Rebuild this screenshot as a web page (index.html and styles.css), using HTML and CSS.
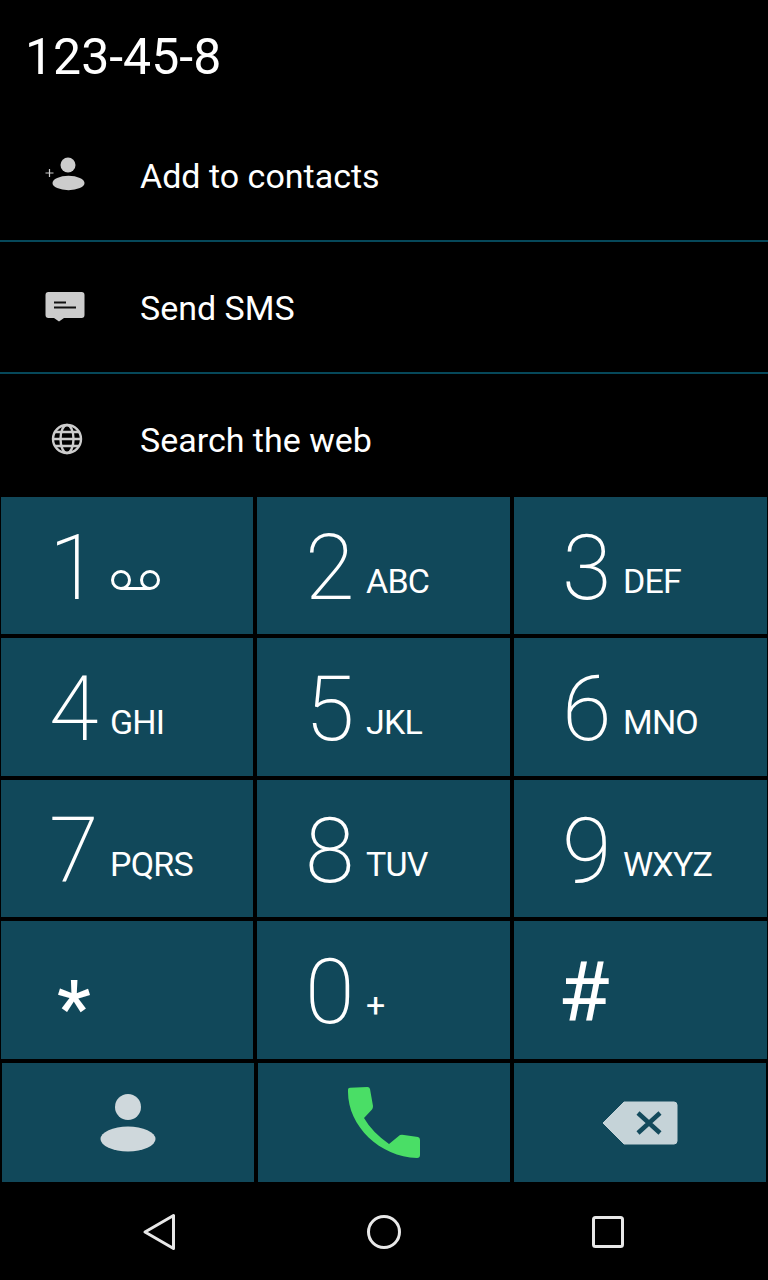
FILE: index.html
```html
<!DOCTYPE html>
<html lang="en">
<head>
    <meta charset="UTF-8">
    <title>Dialer</title>
    <link rel="stylesheet" href="styles.css">
</head>
<body>

<div class="number">123-45-8</div>

<div class="action">
    <svg class="actionIcon" viewBox="0 0 48 40">
        <circle cx="25" cy="10" r="7.500" fill="#ccc"/>
        <ellipse cx="25.500" cy="28" rx="16" ry="7.200" fill="#ccc"/>
        <path d="M2.500 18h8M6.500 14v8" stroke="#ccc" stroke-width="1.200" fill="none"/>
    </svg>
    <span>Add to contacts</span>
</div>
<div class="action">
    <svg class="actionIcon" viewBox="0 0 48 40">
        <path d="M5.500 5h33a3 3 0 0 1 3 3v20a3 3 0 0 1-3 3H21l-5 3.500-5-3.500H5.500a3 3 0 0 1-3-3V8a3 3 0 0 1 3-3z" fill="#ccc"/>
        <path d="M11 15.500h12M11 20.500h22" stroke="#111" stroke-width="1.800" fill="none"/>
    </svg>
    <span>Send SMS</span>
</div>
<div class="action last">
    <svg class="actionIcon" viewBox="0 0 48 40">
        <g fill="none" stroke="#ccc" stroke-width="2.400">
            <circle cx="24" cy="20" r="14"/>
            <ellipse cx="24" cy="20" rx="6.500" ry="14"/>
            <path d="M10 20h28M12 13h24M12 27h24"/>
        </g>
    </svg>
    <span>Search the web</span>
</div>

<div class="keypad">
    <div class="key"><span class="digit">1</span>
        <svg class="voicemail" viewBox="0 0 50 22">
            <g fill="none" stroke="#fff" stroke-width="3">
                <circle cx="10" cy="11" r="8.500"/>
                <circle cx="39" cy="11" r="8.500"/>
                <path d="M10 19.500h29"/>
            </g>
        </svg>
    </div>
    <div class="key"><span class="digit">2</span><span class="letters">ABC</span></div>
    <div class="key"><span class="digit">3</span><span class="letters">DEF</span></div>
    <div class="key"><span class="digit">4</span><span class="letters">GHI</span></div>
    <div class="key"><span class="digit">5</span><span class="letters">JKL</span></div>
    <div class="key"><span class="digit">6</span><span class="letters">MNO</span></div>
    <div class="key"><span class="digit">7</span><span class="letters">PQRS</span></div>
    <div class="key"><span class="digit">8</span><span class="letters">TUV</span></div>
    <div class="key"><span class="digit">9</span><span class="letters">WXYZ</span></div>
    <div class="key"><span class="digit star">*</span></div>
    <div class="key"><span class="digit">0</span><span class="letters">+</span></div>
    <div class="key"><span class="digit hash">#</span></div>
</div>

<div class="bottomKeys">
    <div class="bottomKey">
        <svg width="56" height="60" viewBox="0 0 56 60">
            <circle cx="28" cy="14" r="13" fill="#cfd8dc"/>
            <ellipse cx="28" cy="46" rx="27.500" ry="12.500" fill="#cfd8dc"/>
        </svg>
    </div>
    <div class="bottomKey">
        <svg width="74" height="74" viewBox="0 0 74 74">
            <path d="M1 3.500Q1 2 3 1.800L20.500 1Q22.500 1 23 3L26 20Q26 22 25 23.500L17 32Q25 46 42 58L53 49Q55 48.500 57 49L71 51Q73 51.500 73 54V69Q73 72 70 72C33 71 1 40 1 6Z" fill="#4ade66"/>
        </svg>
    </div>
    <div class="bottomKey">
        <svg width="76" height="44" viewBox="0 0 76 44">
            <path d="M1 22L22 1H72Q75 1 75 4V40Q75 43 72 43H22Z" fill="#c5d3d8" stroke="#c5d3d8" stroke-linejoin="round"/>
            <path d="M36 12L58 32M58 12L36 32" stroke="#134a5c" stroke-width="4.500" fill="none"/>
        </svg>
    </div>
</div>

<div class="navBar">
    <svg width="36" height="40" viewBox="0 0 36 40">
        <path d="M3 20L31.500 3.500V36.500Z" fill="none" stroke="#e8e8e8" stroke-width="3" stroke-linejoin="round"/>
    </svg>
    <svg width="36" height="36" viewBox="0 0 36 36">
        <circle cx="18" cy="18" r="15.500" fill="none" stroke="#e8e8e8" stroke-width="3"/>
    </svg>
    <svg width="34" height="34" viewBox="0 0 34 34">
        <rect x="2.500" y="2.500" width="29" height="29" rx="2" fill="none" stroke="#e8e8e8" stroke-width="3"/>
    </svg>
</div>

</body>
</html>
```

FILE: styles.css
```css
* {
    box-sizing: border-box;
}

body {
    margin: 0;
    width: 768px;
    height: 1280px;
    overflow: hidden;
    background: #000;
    color: #fff;
    font-family: Roboto, "Liberation Sans", sans-serif;
}

.number {
    height: 110px;
    padding: 28px 0 0 25px;
    font-size: 50px;
    line-height: 58px;
}

.action {
    display: flex;
    align-items: center;
    height: 132px;
    padding-left: 43px;
    border-bottom: 2px solid #06485a;
    font-size: 34px;
}

.action.last {
    height: 122px;
    padding-top: 8px;
    border-bottom: none;
}

.actionIcon {
    width: 48px;
    height: 40px;
    margin-right: 49px;
}

.action span {
    padding-top: 2px;
}

.keypad {
    display: grid;
    grid-template-columns: 252px 253px 253px;
    grid-template-rows: 137px 138px 137px 138px;
    gap: 4px;
    padding: 1px 1px 0;
}

.key {
    display: flex;
    align-items: baseline;
    padding: 18px 0 0 48px;
    background: #11485a;
}

.digit {
    width: 61px;
    font-size: 90px;
    font-weight: 200;
    line-height: 108px;
}

.letters {
    position: relative;
    top: -6px;
    font-size: 34px;
    letter-spacing: -0.8px;
}

.voicemail {
    width: 50px;
    height: 22px;
    align-self: center;
    margin-top: 11px;
    margin-left: 1px;
}

.star {
    position: relative;
    top: 15px;
    left: 8px;
    font-weight: 500;
    font-size: 76px;
}

.hash {
    position: relative;
    top: 0;
    left: -4px;
    font-weight: 400;
    font-size: 84px;
}

.bottomKeys {
    display: grid;
    grid-template-columns: repeat(3, 1fr);
    gap: 4px;
    height: 123px;
    padding: 4px 2px 0;
}

.bottomKey {
    display: flex;
    align-items: center;
    justify-content: center;
    background: #11485a;
}

.navBar {
    display: grid;
    grid-template-columns: repeat(3, 224px);
    justify-items: center;
    align-items: center;
    height: 98px;
    padding: 2px 48px 0;
}
```
